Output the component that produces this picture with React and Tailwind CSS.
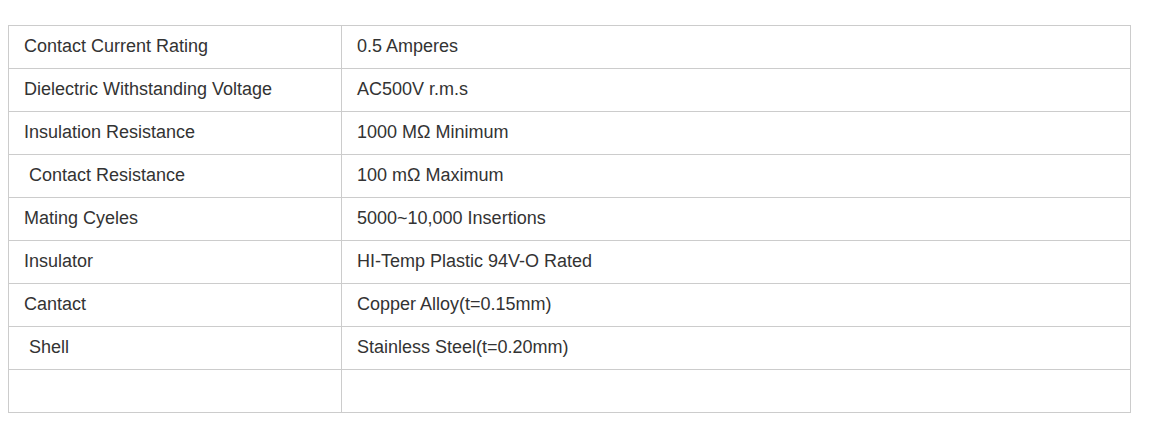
export default function App() {
  const rows = [
    ["Contact Current Rating", "0.5 Amperes"],
    ["Dielectric Withstanding Voltage", "AC500V r.m.s"],
    ["Insulation Resistance", "1000 MΩ Minimum"],
    ["\u00a0Contact Resistance", "100 mΩ Maximum"],
    ["Mating Cyeles", "5000~10,000 Insertions"],
    ["Insulator", "HI-Temp Plastic 94V-O Rated"],
    ["Cantact", "Copper Alloy(t=0.15mm)"],
    ["\u00a0Shell", "Stainless Steel(t=0.20mm)"],
    ["", ""],
  ];
  return (
    <div className="bg-white w-[1154px] h-[438px] pt-[25px] pl-[8px]" style={{ fontFamily: '"Liberation Sans", Arial, sans-serif' }}>
      <table className="w-[1123px] border-collapse text-[18px] leading-[20px] text-[#333333]">
        <tbody>
          {rows.map((r, i) => (
            <tr key={i} className="h-[43px]">
              <td className="w-[333px] border border-[#cccccc] px-[15px] pt-0 pb-[2px] align-middle">{r[0]}</td>
              <td className="border border-[#cccccc] px-[15px] pt-0 pb-[2px] align-middle">{r[1]}</td>
            </tr>
          ))}
        </tbody>
      </table>
    </div>
  );
}
